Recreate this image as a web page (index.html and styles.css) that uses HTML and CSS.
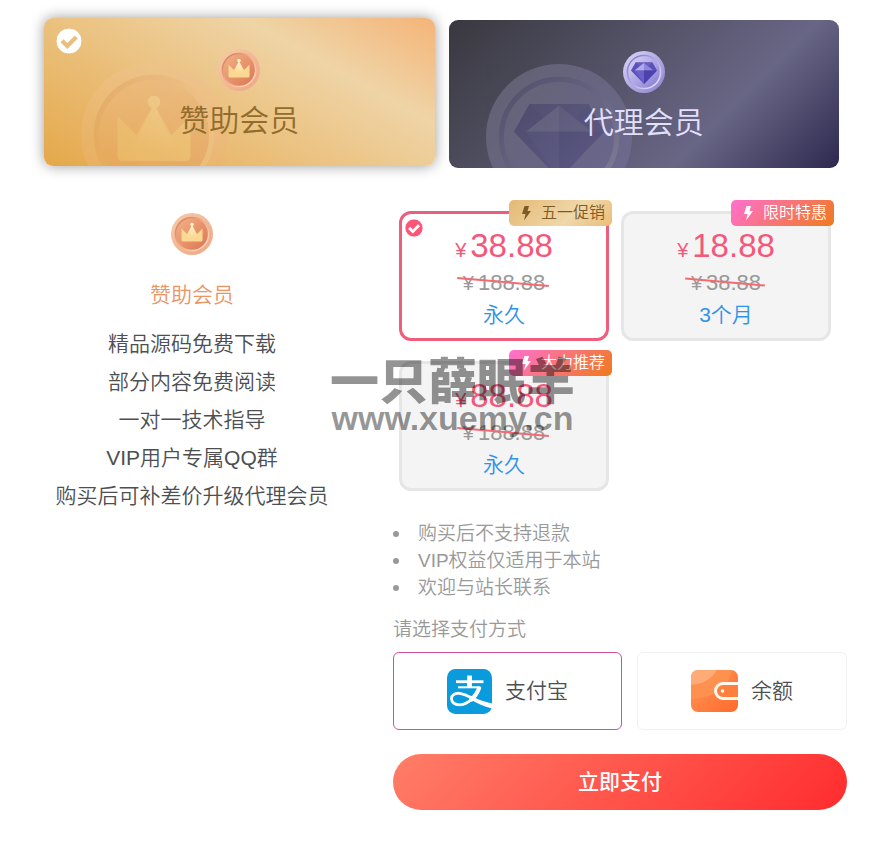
FILE: index.html
```html
<!DOCTYPE html>
<html lang="zh-CN">
<head>
<meta charset="utf-8">
<meta name="viewport" content="width=device-width, initial-scale=1">
<title>开通会员</title>
<link rel="stylesheet" href="styles.css">
</head>
<body>
<svg class="defs" aria-hidden="true">
  <defs>
    <linearGradient id="copper" x1="0" y1="0" x2="1" y2="1"><stop offset="0" stop-color="#f8cba8"/><stop offset="1" stop-color="#efa583"/></linearGradient>
    <linearGradient id="copper-in" x1="0" y1="0" x2="1" y2="1"><stop offset="0" stop-color="#f2b48a"/><stop offset="1" stop-color="#dc7450"/></linearGradient>
    <linearGradient id="copper-rim" x1="0" y1="0" x2="1" y2="1"><stop offset="0" stop-color="#cf7a50"/><stop offset=".5" stop-color="#efb08c"/><stop offset="1" stop-color="#ffe6d4"/></linearGradient>
    <linearGradient id="crown-fill" x1="0" y1="0" x2="0" y2="1"><stop offset="0" stop-color="#fff4cc"/><stop offset="1" stop-color="#fbd58c"/></linearGradient>
    <linearGradient id="violet" x1="0" y1="0" x2="1" y2="1"><stop offset="0" stop-color="#dcd8fa"/><stop offset="1" stop-color="#8a80cc"/></linearGradient>
    <linearGradient id="violet-in" x1="0" y1="0" x2="1" y2="1"><stop offset="0" stop-color="#dcd9fb"/><stop offset="1" stop-color="#8278cf"/></linearGradient>
    <linearGradient id="violet-rim" x1="0" y1="0" x2="1" y2="1"><stop offset="0" stop-color="#7b72bd"/><stop offset=".5" stop-color="#b0a8e6"/><stop offset="1" stop-color="#f3f0ff"/></linearGradient>
    <linearGradient id="wallet-fill" x1="0" y1="0" x2="1" y2="1"><stop offset="0" stop-color="#ff9a5c"/><stop offset="1" stop-color="#ff6a2b"/></linearGradient>
    <clipPath id="wallet-clip"><rect width="47" height="42" rx="7"/></clipPath>
    <symbol id="coin-crown" viewBox="0 0 42 42">
      <circle cx="21" cy="21" r="21" fill="url(#copper)"/>
      <circle cx="21" cy="21" r="16.600" fill="url(#copper-in)" stroke="url(#copper-rim)" stroke-width="1.500"/>
      <path d="M10.5 15.5 16 21l5-9 5 9 5.5-5.5v11.500q0 1.500-1.500 1.500H12q-1.500 0-1.500-1.500z" fill="#fbd892"/>
      <path d="M21 12 27.500 26H14.500z" fill="url(#crown-fill)"/>
      <circle cx="21" cy="11.500" r="1.800" fill="#fff0c4"/>
    </symbol>
    <symbol id="coin-gem" viewBox="0 0 42 42">
      <circle cx="21" cy="21" r="21" fill="url(#violet)"/>
      <circle cx="21" cy="21" r="16.600" fill="url(#violet-in)" stroke="url(#violet-rim)" stroke-width="1.500"/>
      <path d="M12.500 11.500h17l4.500 8L21 33 8 19.500z" fill="#5b50b8"/>
      <path d="M12.500 11.500h17L21 19.500z" fill="#665dbd"/>
      <path d="M21 12 30.500 19.500h-19z" fill="#8f88d8"/>
      <path d="M21 12v7.500h-9.500z" fill="#b0abea"/>
      <path d="M21 19.500h13L21 33z" fill="#4c42ae"/>
      <path d="M11.500 19.500H21V33z" fill="#6a60c8"/>
    </symbol>
    <symbol id="bolt" viewBox="0 0 12 16">
      <path d="M4.500 1H9L7.500 6H11L4 15.500 5.500 9H2z" fill="currentColor"/>
    </symbol>
    <symbol id="tick" viewBox="0 0 26 26">
      <circle cx="13" cy="13" r="13" fill="currentColor"/>
      <path d="M6 12.800 11.300 18 20.300 9" fill="none" stroke-width="4.200"/>
    </symbol>
  </defs>
</svg>

<form class="checkout">
  <div class="tiers">
    <label class="tier tier-gold">
      <input class="pick" type="radio" name="tier" checked>
      <svg class="tier-art" aria-hidden="true"><use href="#coin-crown"/></svg>
      <svg class="tier-tick" aria-hidden="true"><use href="#tick"/></svg>
      <svg class="medal" aria-hidden="true"><use href="#coin-crown"/></svg>
      <span class="tier-name">赞助会员</span>
    </label>
    <label class="tier tier-dark">
      <input class="pick" type="radio" name="tier">
      <svg class="tier-art" aria-hidden="true"><use href="#coin-gem"/></svg>
      <svg class="tier-tick" aria-hidden="true"><use href="#tick"/></svg>
      <svg class="medal" aria-hidden="true"><use href="#coin-gem"/></svg>
      <span class="tier-name">代理会员</span>
    </label>
  </div>

  <div class="details">
    <section class="benefits">
      <svg class="medal" aria-hidden="true"><use href="#coin-crown"/></svg>
      <h2 class="benefits-name">赞助会员</h2>
      <ul class="benefits-list">
        <li>精品源码免费下载</li>
        <li>部分内容免费阅读</li>
        <li>一对一技术指导</li>
        <li>VIP用户专属QQ群</li>
        <li>购买后可补差价升级代理会员</li>
      </ul>
    </section>

    <section class="purchase">
      <div class="plans">
        <label class="plan">
          <input class="pick" type="radio" name="plan" checked>
          <svg class="plan-tick" aria-hidden="true"><use href="#tick"/></svg>
          <span class="tag tag-gold"><svg class="bolt" aria-hidden="true"><use href="#bolt"/></svg>五一促销</span>
          <span class="price"><span class="yen">¥</span>38.88</span>
          <span class="was"><s class="was-value"><span class="was-yen">¥</span>188.88</s></span>
          <span class="term">永久</span>
        </label>
        <label class="plan">
          <input class="pick" type="radio" name="plan">
          <svg class="plan-tick" aria-hidden="true"><use href="#tick"/></svg>
          <span class="tag"><svg class="bolt" aria-hidden="true"><use href="#bolt"/></svg>限时特惠</span>
          <span class="price"><span class="yen">¥</span>18.88</span>
          <span class="was"><s class="was-value"><span class="was-yen">¥</span>38.88</s></span>
          <span class="term">3个月</span>
        </label>
        <label class="plan">
          <input class="pick" type="radio" name="plan">
          <svg class="plan-tick" aria-hidden="true"><use href="#tick"/></svg>
          <span class="tag"><svg class="bolt" aria-hidden="true"><use href="#bolt"/></svg>大力推荐</span>
          <span class="price"><span class="yen">¥</span>88.88</span>
          <span class="was"><s class="was-value"><span class="was-yen">¥</span>188.88</s></span>
          <span class="term">永久</span>
        </label>
      </div>

      <ul class="notes">
        <li>购买后不支持退款</li>
        <li>VIP权益仅适用于本站</li>
        <li>欢迎与站长联系</li>
      </ul>

      <p class="pay-title">请选择支付方式</p>
      <div class="methods">
        <label class="method">
          <input class="pick" type="radio" name="method" checked>
          <svg class="method-icon" width="45" height="45" viewBox="0 0 45 45" aria-hidden="true">
            <rect width="45" height="45" rx="8.500" fill="#0a9bdc"/>
            <g fill="none" stroke="#fff">
              <path d="M22.500 6.500V18" stroke-width="4.800"/>
              <path d="M9 12.700H36.500" stroke-width="2.800"/>
              <path d="M11 18.300H33.500" stroke-width="2"/>
              <path d="M32.500 18C30 26 22 35.500 13 35.800 7.500 36 4.500 33 4.500 29.500 4.500 26.500 7.500 24 12 24.300 18 24.700 24 28.500 31 32" stroke-width="2.800"/>
              <path d="M32.500 18C30.500 24 27 28.500 23.500 31.500" stroke-width="4"/>
            </g>
            <path d="M23 26.500 Q33 32 45 34.500 V39.500 Q33 36.500 22 29.500z" fill="#fff"/>
          </svg>
          <span class="method-name">支付宝</span>
        </label>
        <label class="method">
          <input class="pick" type="radio" name="method">
          <svg class="method-icon" width="47" height="42" viewBox="0 0 47 42" aria-hidden="true">
            <g clip-path="url(#wallet-clip)">
              <rect width="47" height="42" fill="url(#wallet-fill)"/>
              <path d="M0 0H26Q18 14 0 15z" fill="#ffab78"/>
              <path d="M26 0H41Q36 27 0 29V15Q18 14 26 0z" fill="#ff9150"/>
            </g>
            <path d="M47 13.500H32a7.500 7.500 0 0 0 0 15H47" fill="#ff7f3f" stroke="#fff8ee" stroke-width="3"/>
            <circle cx="31.500" cy="21" r="1.800" fill="#fff"/>
          </svg>
          <span class="method-name">余额</span>
        </label>
      </div>

      <button class="pay" type="button">立即支付</button>
    </section>

    <div class="watermark">
      <span class="watermark-name">一只薛眠羊</span>
      <span class="watermark-url">www.xuemy.cn</span>
    </div>
  </div>
</form>
</body>
</html>
```
FILE: styles.css
```css
* {
  box-sizing: border-box;
}

body {
  margin: 0;
  background: #fff;
  color: #4d4f53;
  font-family: "Liberation Sans", "Noto Sans CJK SC", sans-serif;
  font-size: 21px;
  font-weight: 350;
}

ul,
h2,
p {
  margin: 0;
  padding: 0;
  font-weight: inherit;
  list-style: none;
}

.defs {
  position: absolute;
  width: 0;
  height: 0;
}

/* Radios stay focusable; the label around them is the visible control. */
.pick {
  position: absolute;
  width: 1px;
  height: 1px;
  margin: 0;
  opacity: 0;
}

.checkout {
  padding: 20px 34px 31px 44px;
}

.medal {
  display: block;
  width: 42px;
  height: 42px;
}

/* Tier cards */

.tiers {
  display: grid;
  grid-template-columns: 1fr 1fr;
  gap: 14px;
  padding-right: 8px;
}

.tier {
  position: relative;
  display: flex;
  flex-direction: column;
  align-items: center;
  gap: 10px;
  padding: 31px 0 25px;
  border-radius: 9px;
  overflow: hidden;
  cursor: pointer;
}

.tier:has(:checked) {
  transform: translateY(-2px);
  box-shadow: 0 0 14px rgba(0, 0, 0, 0.4);
}

.tier-gold {
  background: linear-gradient(29deg, #e5a84a, #efd4a6 71%, #f5b478);
  color: #916c2c;
}

.tier-dark {
  background: linear-gradient(135deg, #39383f, #686685 69%, #2e284f);
  color: #e3e0ff;
}

.tier-art {
  position: absolute;
  top: 44px;
  left: 37px;
  width: 146px;
  height: 146px;
  opacity: 0.2;
}

.tier-tick {
  position: absolute;
  top: 10px;
  left: 12px;
  display: none;
  width: 26px;
  height: 26px;
  color: #fff;
  stroke: #e9bf7b;
}

.tier :checked ~ .tier-tick {
  display: block;
}

.tier .medal,
.tier-name {
  position: relative;
}

.tier-name {
  font-size: 30px;
  line-height: 40px;
}

/* Benefits and purchase columns */

.details {
  position: relative;
  display: grid;
  grid-template-columns: 296fr 454fr;
  gap: 53px;
  margin-top: 33px;
}

.benefits {
  display: flex;
  flex-direction: column;
  align-items: center;
  padding-top: 12px;
  line-height: 38px;
  text-align: center;
}

.benefits-name {
  margin: 21px 0 11px;
  color: #ea9464;
  font-size: 21px;
}

.benefits-list {
  white-space: nowrap;
}

.purchase {
  padding-top: 10px;
}

.plans {
  display: grid;
  grid-template-columns: 1fr 1fr;
  gap: 20px 12px;
  padding: 0 16px 0 6px;
}

.plan {
  position: relative;
  display: flex;
  flex-direction: column;
  align-items: center;
  padding: 11px 0 7px;
  border: 3px solid #e6e6e6;
  border-radius: 12px;
  background: #f4f4f4;
  line-height: 32px;
  cursor: pointer;
}

.plan:has(:checked) {
  border-color: #ee5d7b;
  background: #fff;
}

.plan-tick {
  position: absolute;
  top: 5px;
  left: 3px;
  display: none;
  width: 18px;
  height: 18px;
  color: #fb5578;
  stroke: #fff;
}

.plan :checked ~ .plan-tick {
  display: block;
}

.tag {
  position: absolute;
  top: -14px;
  right: -6px;
  display: flex;
  align-items: center;
  gap: 9px;
  padding: 0 7px 0 11px;
  border-radius: 5px;
  background: linear-gradient(135deg, #ff70d0, #f07a1c);
  color: #fff;
  font-size: 16px;
  line-height: 26px;
}

.tag-gold {
  background: linear-gradient(135deg, #e4b873, #f0d8aa 60%, #ecbc78);
  color: #7d5b25;
}

.bolt {
  width: 12px;
  height: 16px;
}

.price {
  height: 42px;
  color: #f3587a;
  font-size: 33px;
  line-height: 42px;
}

.yen,
.was-yen {
  margin-right: 4px;
  font-size: 20px;
  line-height: 20px;
}

.was {
  height: 32px;
  color: #999;
  font-size: 22px;
}

.was-value {
  position: relative;
  text-decoration: none;
}

.was-value::after {
  content: "";
  position: absolute;
  top: 50%;
  left: -6px;
  right: -4px;
  height: 2px;
  margin-top: -2px;
  background: #f46a72;
  transform: rotate(5deg);
}

.term {
  height: 32px;
  color: #2f93e8;
}

/* Notes and payment */

.notes {
  margin-top: 29px;
  color: #999;
  font-size: 19px;
  line-height: 27px;
}

.notes li {
  display: flex;
  align-items: center;
  gap: 19px;
}

.notes li::before {
  content: "";
  width: 6px;
  height: 6px;
  border-radius: 50%;
  background: #999;
}

.pay-title {
  margin: 15px 0 9px;
  color: #999;
  font-size: 19px;
  line-height: 27px;
}

.methods {
  display: flex;
  gap: 15px;
}

.method {
  display: flex;
  flex: 1 1 auto;
  align-items: center;
  justify-content: center;
  gap: 13px;
  min-height: 78px;
  border: 1px solid #f1f1f1;
  border-radius: 6px;
  line-height: 32px;
  cursor: pointer;
}

.method:has(:checked) {
  border-color: #d0509a;
}

.method-icon {
  flex: none;
}

.pay {
  display: block;
  width: 100%;
  margin-top: 24px;
  padding: 0;
  border: 0;
  border-radius: 28px;
  background: linear-gradient(135deg, #ff7e68, #ff2c2e);
  color: #fff;
  font: inherit;
  font-weight: 500;
  line-height: 56px;
  cursor: pointer;
}

.watermark {
  position: absolute;
  top: 157px;
  left: 286px;
  display: flex;
  flex-direction: column;
  align-items: center;
  color: rgba(0, 0, 0, 0.42);
  line-height: 48px;
  pointer-events: none;
}

.watermark-name {
  font-size: 49px;
  font-weight: 900;
}

.watermark-url {
  margin-top: -8px;
  font-size: 34px;
  font-weight: 700;
  line-height: 40px;
}
```
